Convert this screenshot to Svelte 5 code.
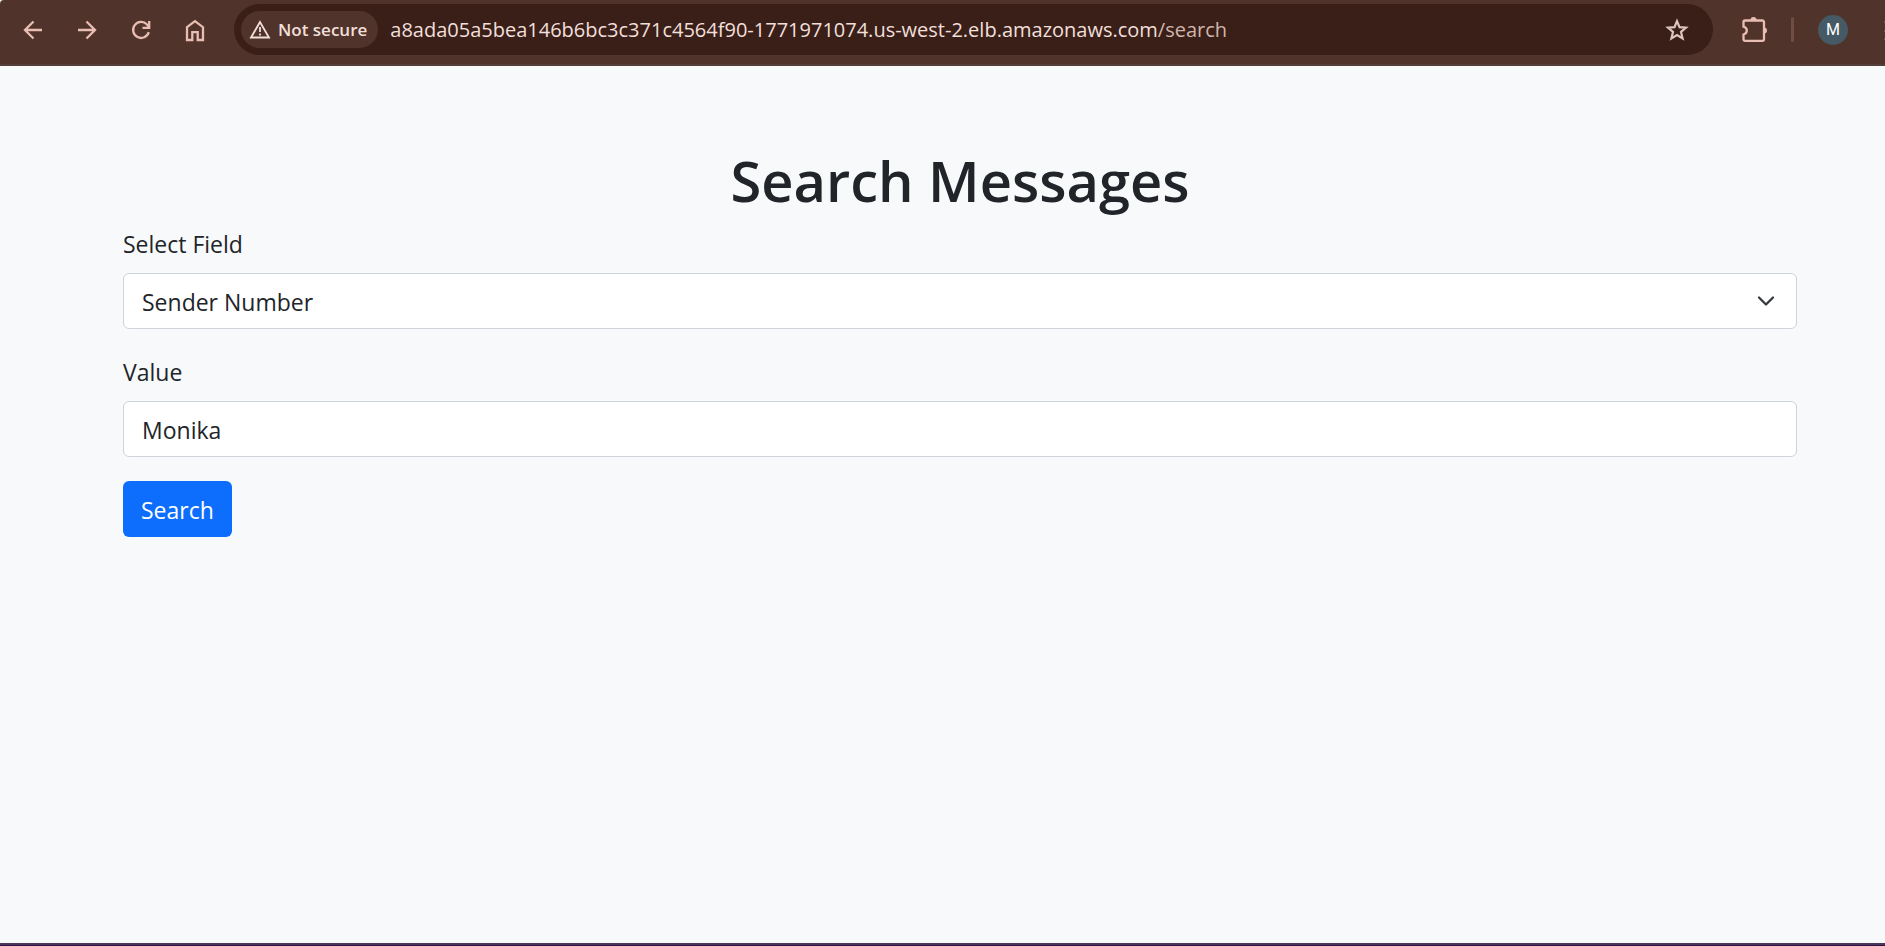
<script>
  let field = $state('sender');
  let value = $state('Monika');
</script>

<div class="window">
  <header class="toolbar">
    <nav class="nav" aria-label="Browser">
      <button class="tool" type="button" aria-label="Back">
        <svg width="30" height="30" viewBox="0 0 30 30"><path d="M24 15H7.500M15.500 6.500 7 15l8.500 8.500" /></svg>
      </button>
      <button class="tool" type="button" aria-label="Forward">
        <svg width="30" height="30" viewBox="0 0 30 30"><path d="M6 15h16.500M14.500 6.500 23 15l-8.500 8.500" /></svg>
      </button>
      <button class="tool" type="button" aria-label="Reload">
        <svg width="30" height="30" viewBox="0 0 30 30"><path d="M22.800 17.200A8 8 0 1 1 21 9.500L23 12M23.200 6v6.800H16.500" /></svg>
      </button>
      <button class="tool" type="button" aria-label="Home">
        <svg width="30" height="30" viewBox="0 0 30 30"><path d="M7 12.200 15 6.200l8 6V25h-5.300v-7.800h-5.400V25H7Z" /></svg>
      </button>
    </nav>

    <div class="omnibox">
      <button class="chip" type="button">
        <svg width="22" height="21" viewBox="0 0 22 21">
          <path d="M11 3 2 18.500h18Z" fill="none" stroke="currentColor" stroke-width="1.800" />
          <path d="M11 8v5M11 14.500v2" fill="none" stroke="currentColor" stroke-width="1.800" />
        </svg>
        <span>Not secure</span>
      </button>
      <div class="url">a8ada05a5bea146b6bc3c371c4564f90-1771971074.us-west-2.elb.amazonaws.com<span>/search</span></div>
      <button class="star" type="button" aria-label="Bookmark this page">
        <svg width="26" height="26" viewBox="0 0 26 26"><path d="M13 4.200 15.500 10.200 22 10.700 17 15 18.600 21.500 13 18 7.400 21.500 9 15 4 10.700 10.500 10.200Z" /></svg>
      </button>
    </div>

    <div class="actions">
      <button class="tool" type="button" aria-label="Extensions">
        <svg width="30" height="30" viewBox="0 0 30 30">
          <path d="M6 5.500h17.500a1.500 1.500 0 0 1 1.500 1.500v17.300a1.500 1.500 0 0 1-1.500 1.500H6a1.500 1.500 0 0 1-1.500-1.500v-4.700c2-.6 3.300-2.100 3.300-4s-1.300-3.400-3.300-4V7A1.500 1.500 0 0 1 6 5.500Z" />
          <path class="solid" d="M11.500 5a3 3 0 0 1 6 0ZM25 12.500a3 3 0 0 1 0 6Z" />
        </svg>
      </button>
      <span class="divider"></span>
      <button class="avatar" type="button">M</button>
    </div>
    <svg class="more" width="1" height="22" viewBox="0 0 1 22"><path d="M0 1h1v2H0zM0 10h1v2H0zM0 18h1v2H0z" /></svg>
  </header>

  <main>
    <h1>Search Messages</h1>
    <form onsubmit={(e) => e.preventDefault()}>
      <div class="group">
        <label for="field">Select Field</label>
        <div class="select">
          <select id="field" bind:value={field}>
            <option value="sender">Sender Number</option>
          </select>
          <svg width="18" height="18" viewBox="0 0 18 18"><path d="m2 5.500 7 7 7-7" /></svg>
        </div>
      </div>
      <div class="group">
        <label for="value">Value</label>
        <input id="value" type="text" bind:value />
      </div>
      <button class="submit" type="submit">Search</button>
    </form>
  </main>
  <footer></footer>
</div>

<style>
  :global(body) {
    margin: 0;
    background: #f8f9fb;
  }

  .window,
  .window * {
    box-sizing: border-box;
  }

  .window {
    min-height: 100vh;
    display: flex;
    flex-direction: column;
    background: #f8f9fb;
    color: #212529;
    font-family: 'Open Sans', 'Noto Sans', sans-serif;
    font-size: 23px;
    line-height: 36px;
  }

  button,
  input,
  select {
    font: inherit;
    color: inherit;
    margin: 0;
  }

  .toolbar {
    position: relative;
    display: flex;
    align-items: center;
    padding: 4px 37px 9px 6px;
    background: #50342b;
    border-bottom: 2px solid #523f3a;
    border-top-left-radius: 4px;
    color: #e9bdb2;
  }

  .nav,
  .actions {
    display: flex;
    align-items: center;
  }

  .nav {
    margin-right: 12px;
  }

  .tool {
    display: flex;
    align-items: center;
    justify-content: center;
    width: 54px;
    height: 51px;
    padding: 1px 0 0;
    border: 0;
    background: none;
  }

  .tool path {
    fill: none;
    stroke: currentColor;
    stroke-width: 2.3;
  }

  .tool .solid {
    fill: currentColor;
    stroke: none;
  }

  .omnibox {
    flex: 1;
    min-width: 0;
    display: flex;
    align-items: center;
    height: 51px;
    padding: 0 23px 0 7px;
    border-radius: 26px;
    background: #3a1f19;
    color: #f1dfda;
  }

  .chip {
    flex: none;
    display: flex;
    align-items: center;
    gap: 7px;
    height: 37px;
    padding: 0 11px 0 8px;
    border: 0;
    border-radius: 19px;
    background: #50342b;
    font-size: 17px;
    line-height: 25px;
    font-weight: 600;
  }

  .url {
    flex: 1;
    min-width: 0;
    margin-left: 12px;
    padding-top: 1px;
    overflow: hidden;
    white-space: nowrap;
    font-size: 20px;
    line-height: 30px;
  }

  .url span {
    color: #cfb5ab;
  }

  .star {
    display: flex;
    padding: 1px 0 0;
    border: 0;
    background: none;
    color: #dcc5be;
  }

  .star path {
    fill: none;
    stroke: currentColor;
    stroke-width: 2.2;
  }

  .actions {
    margin-left: 14px;
  }

  .divider {
    width: 3px;
    height: 25px;
    margin: 0 24px 0 10px;
    border-radius: 2px;
    background: #6f4d43;
  }

  .avatar {
    width: 30px;
    height: 30px;
    margin-top: 1px;
    padding: 0;
    border: 0;
    border-radius: 50%;
    background: #455a64;
    color: #fff;
    font-family: Roboto, sans-serif;
    font-size: 16px;
    line-height: 30px;
  }

  .more {
    position: absolute;
    right: 0;
    top: 20px;
    fill: #76564c;
  }

  main {
    flex: 1;
    padding: 78px 88px 48px 123px;
  }

  h1 {
    margin: 0 0 9px;
    font-size: 56px;
    line-height: 72px;
    font-weight: 600;
    text-align: center;
  }

  .group {
    margin-bottom: 24px;
  }

  label {
    display: block;
    margin-bottom: 11px;
    padding-top: 1px;
  }

  .select {
    position: relative;
  }

  select,
  input {
    display: block;
    width: 100%;
    height: 56px;
    padding: 2px 18px 0;
    border: 1px solid #ced4da;
    border-radius: 6px;
    background: #fff;
    appearance: none;
  }

  .select svg {
    position: absolute;
    right: 22px;
    top: 19px;
    pointer-events: none;
  }

  .select path {
    fill: none;
    stroke: #343a40;
    stroke-width: 2.3;
    stroke-linecap: round;
    stroke-linejoin: round;
  }

  .submit {
    display: block;
    height: 56px;
    padding: 2px 18px 0;
    border: 0;
    border-radius: 6px;
    background: #0d6efd;
    color: #fff;
  }

  footer {
    height: 3px;
    background: #2c1245;
    border-top: 2px solid #4e3658;
  }
</style>
